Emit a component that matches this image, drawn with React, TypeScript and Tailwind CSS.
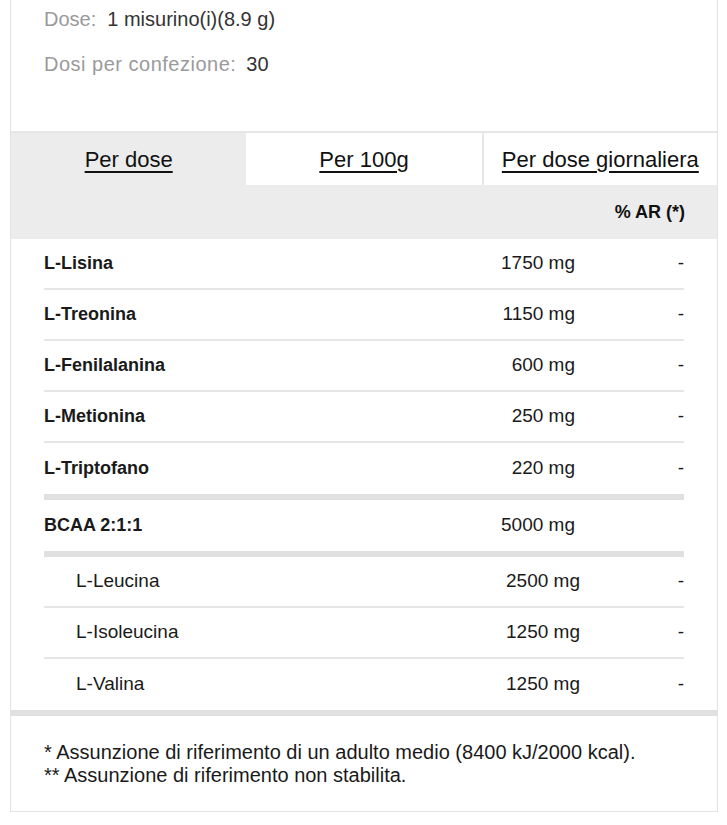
import React from "react"

interface Nutrient {
  name: string
  amount: string
  ar?: string
  sub?: boolean
}

const groupA: Nutrient[] = [
  { name: "L-Lisina", amount: "1750 mg", ar: "-" },
  { name: "L-Treonina", amount: "1150 mg", ar: "-" },
  { name: "L-Fenilalanina", amount: "600 mg", ar: "-" },
  { name: "L-Metionina", amount: "250 mg", ar: "-" },
  { name: "L-Triptofano", amount: "220 mg", ar: "-" },
]

const bcaa: Nutrient[] = [
  { name: "L-Leucina", amount: "2500 mg", ar: "-", sub: true },
  { name: "L-Isoleucina", amount: "1250 mg", ar: "-", sub: true },
  { name: "L-Valina", amount: "1250 mg", ar: "-", sub: true },
]

const Row = ({ item, last }: { item: Nutrient; last?: boolean }) => (
  <div
    className={`flex items-center h-[51px] text-[19px] text-[#1a1a1a] ${
      last ? "" : "border-b-2 border-[#e6e6e6]"
    }`}
  >
    <div className={`flex-1 ${item.sub ? "pl-[32px]" : "font-bold text-[18px]"}`}>{item.name}</div>
    <div className="text-right">{item.amount}</div>
    <div className={`text-right ${item.sub ? "w-[104px]" : "w-[109px]"}`}>{item.ar}</div>
  </div>
)

export default function App() {
  return (
    <div className="w-[727px] h-[825px] bg-white font-['Liberation_Sans',Arial,sans-serif]">
      <div className="ml-[10px] w-[708px] border-x border-b border-[#e2e2e2]">
        {/* dose info */}
        <div className="h-[131px] px-[33px] pt-[7px] text-[20px]">
          <div className="h-[24px] flex items-center">
            <span className="text-[#9a9a9a]">Dose:</span>
            <span className="ml-[11px] text-[#333]">1 misurino(i)(8.9 g)</span>
          </div>
          <div className="h-[24px] mt-[21px] flex items-center">
            <span className="text-[#9a9a9a] tracking-[0.5px]">Dosi per confezione:</span>
            <span className="ml-[10px] text-[#333]">30</span>
          </div>
        </div>

        {/* tabs */}
        <div className="grid grid-cols-3 h-[54px] border-t-2 border-[#e6e6e6] text-[22px] text-[#111]">
          <div className="bg-[#ececec] flex items-center justify-center">
            <span className="underline underline-offset-[4px]">Per dose</span>
          </div>
          <div className="flex items-center justify-center">
            <span className="underline underline-offset-[4px]">Per 100g</span>
          </div>
          <div className="border-l-2 border-[#e6e6e6] flex items-center justify-center">
            <span className="underline underline-offset-[4px]">Per dose giornaliera</span>
          </div>
        </div>

        <div className="bg-[#ececec] h-[54px] flex items-center justify-end pr-[32px] text-[18px] font-bold text-[#111]">
          % AR (*)
        </div>

        {/* table */}
        <div className="px-[33px]">
          {groupA.map((n, i) => (
            <Row key={n.name} item={n} last={i === groupA.length - 1} />
          ))}
          <div className="h-[6px] bg-[#e0e0e0]" />
          <div className="flex items-center h-[51px] text-[19px] text-[#1a1a1a]">
            <div className="flex-1 font-bold text-[18px]">BCAA 2:1:1</div>
            <div className="text-right">5000 mg</div>
            <div className="w-[109px]" />
          </div>
          <div className="h-[6px] bg-[#e0e0e0]" />
          {bcaa.map((n, i) => (
            <Row key={n.name} item={n} last={i === bcaa.length - 1} />
          ))}
        </div>
        <div className="h-[6px] bg-[#e0e0e0]" />

        {/* footnotes */}
        <div className="px-[33px] pt-[25px] pb-[24px] text-[20px] text-[#1a1a1a] leading-[23px]">
          <p>* Assunzione di riferimento di un adulto medio (8400 kJ/2000 kcal).</p>
          <p>** Assunzione di riferimento non stabilita.</p>
        </div>
      </div>
    </div>
  )
}
